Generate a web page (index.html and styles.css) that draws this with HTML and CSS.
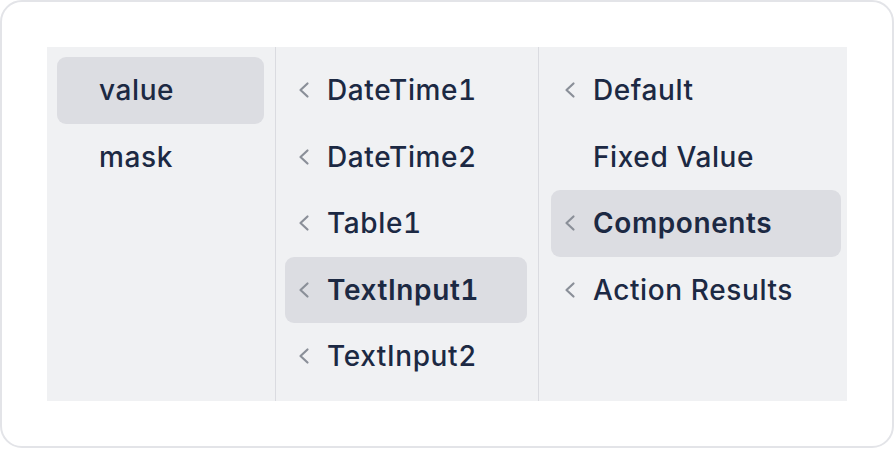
FILE: index.html
```html
<!DOCTYPE html>
<html>
<head>
<meta charset="utf-8">
<link rel="stylesheet" href="styles.css">
</head>
<body>
<div class="card">
  <div class="panel">
    <ul class="col col-1">
      <li class="item selected"><span class="slot"></span><span class="label">value</span></li>
      <li class="item"><span class="slot"></span><span class="label">mask</span></li>
    </ul>
    <ul class="col col-2">
      <li class="item"><span class="slot"><svg class="chev" viewBox="0 0 14 18"><polyline points="10.5,2.5 3.5,9 10.5,15.5"/></svg></span><span class="label">DateTime1</span></li>
      <li class="item"><span class="slot"><svg class="chev" viewBox="0 0 14 18"><polyline points="10.5,2.5 3.5,9 10.5,15.5"/></svg></span><span class="label">DateTime2</span></li>
      <li class="item"><span class="slot"><svg class="chev" viewBox="0 0 14 18"><polyline points="10.5,2.5 3.5,9 10.5,15.5"/></svg></span><span class="label">Table1</span></li>
      <li class="item selected"><span class="slot"><svg class="chev" viewBox="0 0 14 18"><polyline points="10.5,2.5 3.5,9 10.5,15.5"/></svg></span><span class="label strong">TextInput1</span></li>
      <li class="item"><span class="slot"><svg class="chev" viewBox="0 0 14 18"><polyline points="10.5,2.5 3.5,9 10.5,15.5"/></svg></span><span class="label">TextInput2</span></li>
    </ul>
    <ul class="col col-3">
      <li class="item"><span class="slot"><svg class="chev" viewBox="0 0 14 18"><polyline points="10.5,2.5 3.5,9 10.5,15.5"/></svg></span><span class="label">Default</span></li>
      <li class="item"><span class="slot"></span><span class="label">Fixed Value</span></li>
      <li class="item selected"><span class="slot"><svg class="chev" viewBox="0 0 14 18"><polyline points="10.5,2.5 3.5,9 10.5,15.5"/></svg></span><span class="label strong">Components</span></li>
      <li class="item"><span class="slot"><svg class="chev" viewBox="0 0 14 18"><polyline points="10.5,2.5 3.5,9 10.5,15.5"/></svg></span><span class="label">Action Results</span></li>
    </ul>
  </div>
</div>
</body>
</html>
```

FILE: styles.css
```css
* {
  box-sizing: border-box;
}

html, body {
  margin: 0;
  padding: 0;
  background: #ffffff;
}

body {
  width: 894px;
  height: 449px;
  font-family: Inter, "Noto Sans", sans-serif;
}

.card {
  width: 894px;
  height: 448px;
  border: 2px solid #e3e4e8;
  border-radius: 22px;
  padding: 45px;
  background: #ffffff;
}

.panel {
  width: 800px;
  height: 354px;
  background: #f0f1f3;
  display: grid;
  grid-template-columns: 229px 263px 1fr;
}

.col {
  list-style: none;
  margin: 0;
  padding: 10px 0 0 0;
}

.col-1,
.col-2 {
  border-right: 1px solid #dadbe0;
}

.col-1 .item {
  margin: 0 11px 0 10px;
}

.col-2 .item {
  margin: 0 11px 0 9px;
}

.col-3 .item {
  margin: 0 6px 0 12px;
}

.item {
  height: 66.5px;
  display: flex;
  align-items: center;
  border-radius: 9px;
}

.item.selected {
  background: #dcdde2;
}

.slot {
  width: 42px;
  flex: none;
  display: flex;
  align-items: center;
}

.chev {
  width: 14px;
  height: 18px;
  margin-left: 12px;
  fill: none;
  stroke: #8a8f98;
  stroke-width: 2.2;
  stroke-linecap: round;
  stroke-linejoin: round;
}

.label {
  font-size: 28px;
  font-weight: 500;
  letter-spacing: 0.6px;
  font-variant-numeric: tabular-nums;
  color: #1c2943;
  white-space: nowrap;
}

.label.strong {
  font-weight: 600;
}
```
